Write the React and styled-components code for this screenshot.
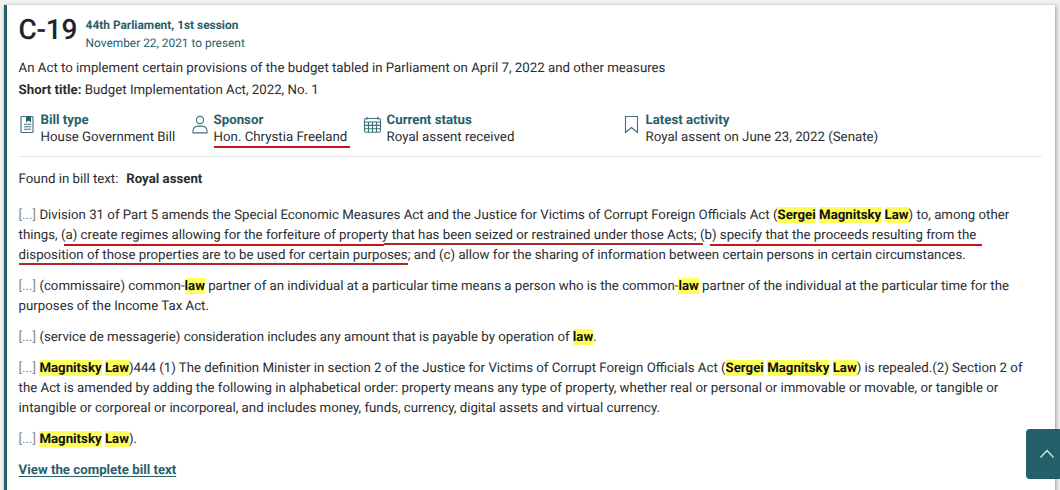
import React from "react";
import styled, { createGlobalStyle } from "styled-components";

const GlobalStyle = createGlobalStyle`
  * {
    box-sizing: border-box;
  }

  body {
    margin: 0;
    overflow: hidden;
    background: #f1f1f1;
    color: #2b2d31;
    font-family: Roboto, "Liberation Sans", sans-serif;
    font-size: 13.25px;
    line-height: 20px;
    text-rendering: geometricPrecision;
  }
`;

const Page = styled.main`
  height: 490px;
  padding: 5px 5px 0 4px;
  overflow: hidden;
`;

const Card = styled.article`
  height: 500px;
  padding: 11px 13px 0 11.6px;
  background: #fff;
  border-left: 3px solid #28606a;
  box-shadow: 1px 1px 4px rgba(0, 0, 0, 0.4);
  white-space: nowrap;
`;

const Header = styled.header`
  display: flex;
  gap: 9px;
`;

const BillNumber = styled.h1`
  width: 58px;
  margin: 0;
  color: #212529;
  font-size: 28px;
  font-weight: 500;
  line-height: 28px;
  letter-spacing: -0.3px;
`;

const Session = styled.div`
  color: #28606a;
  font-size: 11.9px;
  line-height: 18px;
`;

const Title = styled.p`
  margin: ${(props) => props.$top}px 0 0;
`;

const Details = styled.div`
  display: grid;
  grid-template-columns: 173px 173px 259px 1fr;
  height: 46px;
  margin-top: 10px;
  border-bottom: 1px solid #e6e9eb;
  line-height: 17px;
`;

const Detail = styled.div`
  display: flex;

  > svg {
    flex: none;
    width: 22px;
    height: 22px;
    margin-top: 3px;
    margin-left: -3px;
    margin-right: 3px;
  }
`;

const DetailText = styled.div`
  padding-top: 1px;
`;

const Label = styled.div`
  color: #28606a;
  font-weight: 700;
`;

const Value = styled.div`
  position: relative;
`;

// Hand-drawn red line laid over the text
const Stroke = styled.span`
  position: absolute;
  left: ${(props) => props.$x}px;
  top: ${(props) => props.$y}px;
  width: ${(props) => props.$w}px;
  height: 2px;
  background: ${(props) => (props.$dark ? "#a82c2e" : "#c4161c")};
`;

const Found = styled.p`
  margin: 13px 0 16px;

  b {
    margin-left: 4.5px;
  }
`;

const Excerpt = styled.p`
  position: relative;
  margin: 0 0 11px;
`;

const Line = styled.span`
  display: block;
`;

const Dots = styled.span`
  color: #85898d;
`;

const Mark = styled.mark`
  padding-top: 1px;
  background: #ffff5c;
  color: #111;
  font-weight: 700;
`;

const Link = styled.a`
  color: #28606a;
  font-weight: 700;
  text-decoration: underline;
  text-underline-offset: 2px;
`;

const TopButton = styled.button`
  position: fixed;
  right: -6px;
  bottom: 11px;
  display: flex;
  align-items: center;
  width: 40px;
  height: 50px;
  padding: 0 0 0 13px;
  border: 0;
  border-radius: 4px;
  background: #23606a;
`;

const Svg = ({ children }) => (
  <svg viewBox="0 0 22 22" fill="none" stroke="#3c717b" strokeWidth="1.1">
    {children}
  </svg>
);

const BillIcon = () => (
  <Svg>
    <rect x="5" y="2.5" width="12" height="16" rx="0.8" />
    <path d="M10 2.5h5v6l-2.5-2-2.5 2z" fill="#28606a" stroke="none" />
    <path d="M8 10.2h7M8 12.7h7M8 15.2h7" />
  </Svg>
);

const PersonIcon = () => (
  <Svg>
    <circle cx="11" cy="6" r="3.6" />
    <path d="M4 18.9v-2a4.8 4.8 0 0 1 4.8-4.8h4.4a4.8 4.8 0 0 1 4.8 4.8v2z" />
  </Svg>
);

const CalendarIcon = () => (
  <Svg>
    <rect x="2.5" y="4.5" width="16" height="13.8" rx="1.5" />
    <path d="M5 2.8v3M16 2.8v3M2.5 8h16M2.5 11.4h16M2.5 14.8h16M6.5 8v10M10.5 8v10M14.5 8v10" />
  </Svg>
);

const BookmarkIcon = () => (
  <Svg>
    <path d="M4.5 2.5h12v16l-6-5-6 5z" />
  </Svg>
);

const App = () => (
  <>
    <GlobalStyle />
    <Page>
      <Card>
        <Header>
          <BillNumber>C-19</BillNumber>
          <Session>
            <b>44th Parliament, 1st session</b>
            <div>November 22, 2021 to present</div>
          </Session>
        </Header>
        <Title $top={7}>
          An Act to implement certain provisions of the budget tabled in
          Parliament on April 7, 2022 and other measures
        </Title>
        <Title $top={2}>
          <b>Short title:</b> Budget Implementation Act, 2022, No. 1
        </Title>

        <Details>
          <Detail>
            <BillIcon />
            <DetailText>
              <Label>Bill type</Label>
              <Value>House Government Bill</Value>
            </DetailText>
          </Detail>
          <Detail>
            <PersonIcon />
            <DetailText>
              <Label>Sponsor</Label>
              <Value>
                Hon. Chrystia Freeland
                <Stroke $x={0} $y={17} $w={136} />
              </Value>
            </DetailText>
          </Detail>
          <Detail>
            <CalendarIcon />
            <DetailText>
              <Label>Current status</Label>
              <Value>Royal assent received</Value>
            </DetailText>
          </Detail>
          <Detail>
            <BookmarkIcon />
            <DetailText>
              <Label>Latest activity</Label>
              <Value>Royal assent on June 23, 2022 (Senate)</Value>
            </DetailText>
          </Detail>
        </Details>

        <Found>
          Found in bill text: <b>Royal assent</b>
        </Found>

        <Excerpt>
          <Line>
            <Dots>[...]</Dots> Division 31 of Part 5 amends the Special Economic
            Measures Act and the Justice for Victims of Corrupt Foreign
            Officials Act (<Mark>Sergei</Mark> <Mark>Magnitsky</Mark>{" "}
            <Mark>Law</Mark>) to, among other
          </Line>
          <Line>
            things, (a) create regimes allowing for the forfeiture of property
            that has been seized or restrained under those Acts; (b) specify
            that the proceeds resulting from the
          </Line>
          <Line>
            disposition of those properties are to be used for certain purposes;
            and (c) allow for the sharing of information between certain persons
            in certain circumstances.
          </Line>
          <Stroke $x={45} $y={38} $w={320} />
          <Stroke $x={365} $y={37} $w={319} $dark />
          <Stroke $x={691} $y={38} $w={272} />
          <Stroke $x={0} $y={57} $w={389} $dark />
        </Excerpt>
        <Excerpt>
          <Line>
            <Dots>[...]</Dots> (commissaire) common-<Mark>law</Mark> partner of
            an individual at a particular time means a person who is the
            common-<Mark>law</Mark> partner of the individual at the particular
            time for the
          </Line>
          <Line>purposes of the Income Tax Act.</Line>
        </Excerpt>
        <Excerpt>
          <Dots>[...]</Dots> (service de messagerie) consideration includes any
          amount that is payable by operation of <Mark>law</Mark>.
        </Excerpt>
        <Excerpt>
          <Line>
            <Dots>[...]</Dots> <Mark>Magnitsky</Mark> <Mark>Law</Mark>)444 (1)
            The definition Minister in section 2 of the Justice for Victims of
            Corrupt Foreign Officials Act (<Mark>Sergei</Mark>{" "}
            <Mark>Magnitsky</Mark> <Mark>Law</Mark>) is repealed.(2) Section 2 of
          </Line>
          <Line>
            the Act is amended by adding the following in alphabetical order:
            property means any type of property, whether real or personal or
            immovable or movable, or tangible or
          </Line>
          <Line>
            intangible or corporeal or incorporeal, and includes money, funds,
            currency, digital assets and virtual currency.
          </Line>
        </Excerpt>
        <Excerpt>
          <Dots>[...]</Dots> <Mark>Magnitsky</Mark> <Mark>Law</Mark>).
        </Excerpt>
        <Link>View the complete bill text</Link>
      </Card>
      <TopButton aria-label="Back to top">
        <svg width="16" height="12" fill="none" stroke="#d5e8ea" strokeWidth="1.3">
          <path d="M1.5 9.5L8 2.5l6.5 7" />
        </svg>
      </TopButton>
    </Page>
  </>
);

export default App;
